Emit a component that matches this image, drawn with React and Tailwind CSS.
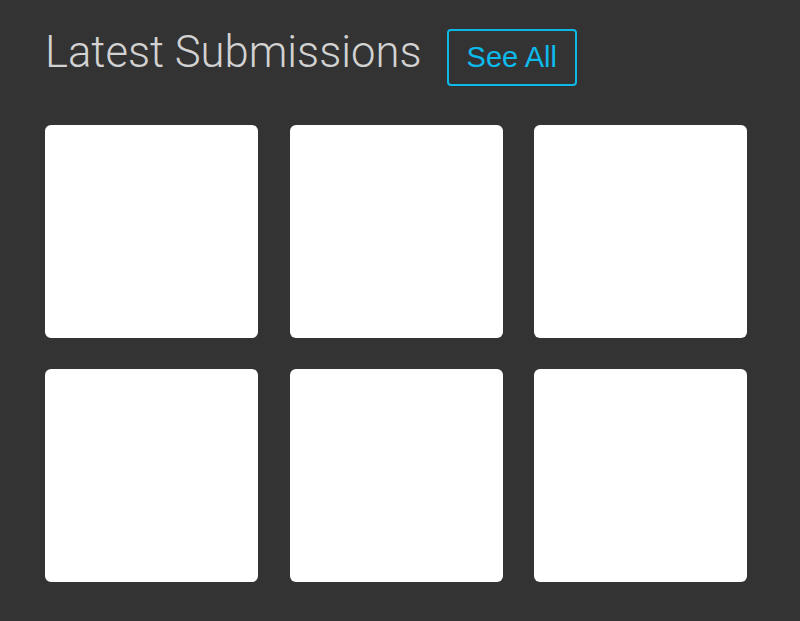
import React from 'react';

const cards = [1, 2, 3, 4, 5, 6];

export default function App() {
  return (
    <div className="min-h-[621px] w-full bg-[#333333] pl-[45px] pt-[29px]" style={{ fontFamily: '"Liberation Sans", Arial, sans-serif' }}>
      {/* Header */}
      <div className="flex items-baseline gap-[25px]">
        <h1 className="text-[43.6px] leading-none font-light text-[#d2d2d2]" style={{ fontFamily: 'Roboto, "Liberation Sans", sans-serif' }}>
          Latest Submissions
        </h1>
        <button className="flex h-[57px] items-center rounded-[4px] border-2 border-[#0cb8e6] px-[18px] text-[29px] leading-none text-[#0cbbec]">
          See All
        </button>
      </div>

      {/* Grid of submissions */}
      <div className="mt-[39px] grid w-[702px] grid-cols-3 gap-x-[31.5px] gap-y-[31px] pb-[39px]">
        {cards.map(c => (
          <div key={c} className="h-[213px] rounded-md bg-white" />
        ))}
      </div>
    </div>
  );
}
